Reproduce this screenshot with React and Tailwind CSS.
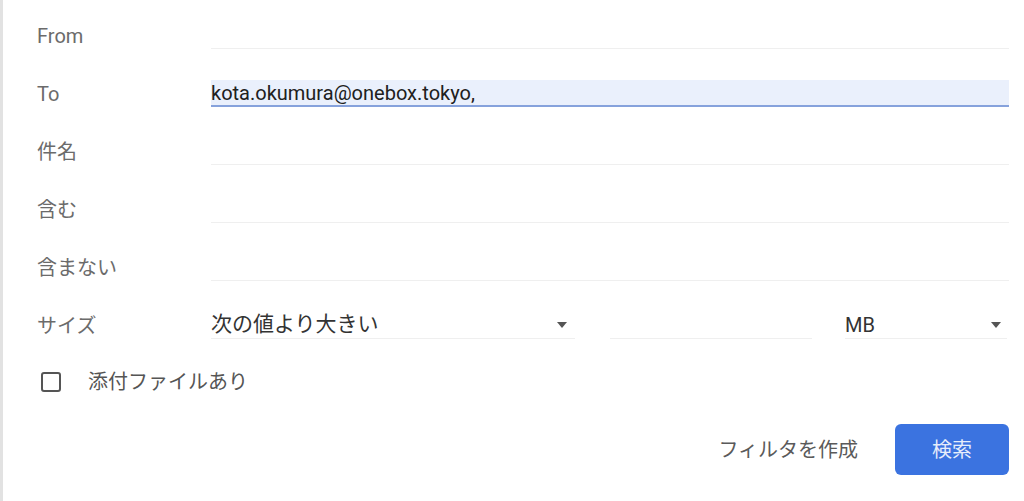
import React, { useState } from "react";

const font = { fontFamily: 'Roboto, "Noto Sans CJK JP", sans-serif' };

function Row({ label, value, active }) {
  return (
    <div className="flex items-center h-[27px]">
      <div className="w-[174px] text-[20px] text-[#6b6b6b]">{label}</div>
      <div
        className={
          active
            ? "flex-1 h-[27px] flex items-center bg-[#eaf0fc] border-b-2 border-[#86a2dc] text-[20px] text-[#202020]"
            : "flex-1 h-[27px] border-b border-[#efefef]"
        }
      >
        {value}
      </div>
    </div>
  );
}

function Arrow() {
  return (
    <svg width="10" height="6" viewBox="0 0 10 6" className="shrink-0">
      <path d="M0 0h10L5 6z" fill="#555" />
    </svg>
  );
}

export default function App() {
  const [attach, setAttach] = useState(false);

  return (
    <div className="w-[1024px] h-[501px] bg-white border-l-[3px] border-[#e2e2e2] overflow-hidden" style={font}>
      <div className="flex flex-col gap-[31px] pt-[22px] pl-[34px] pr-[15px]">
        <Row label="From" />
        <Row label="To" value="kota.okumura@onebox.tokyo," active />
        <Row label="件名" />
        <Row label="含む" />
        <Row label="含まない" />
        <div className="flex items-center h-[27px]">
          <div className="w-[174px] text-[20px] text-[#6b6b6b]">サイズ</div>
          <div className="w-[364px] h-[27px] flex items-center justify-between pr-[8px] border-b border-[#efefef] text-[21px] text-[#333]">
            次の値より大きい
            <Arrow />
          </div>
          <div className="w-[202px] h-[27px] ml-[35px] border-b border-[#efefef]" />
          <div className="w-[162px] h-[27px] ml-[33px] flex items-center justify-between pr-[6px] border-b border-[#efefef] text-[20px] text-[#333]">
            MB
            <Arrow />
          </div>
        </div>
      </div>
      <label className="flex items-center mt-[29px] ml-[5px] h-[28px] cursor-pointer">
        <input type="checkbox" className="hidden" checked={attach} onChange={(e) => setAttach(e.target.checked)} />
        <span className="w-[20px] h-[20px] ml-[33px] border-2 border-[#555] rounded-[3px]" />
        <span className="ml-[27px] text-[20px] text-[#555]">添付ファイルあり</span>
      </label>
      <div className="flex items-center justify-end mt-[28px] pr-[15px]">
        <button className="text-[20px] text-[#5a5a5a] mr-[37px]">フィルタを作成</button>
        <button className="w-[114px] h-[51px] bg-[#3b73e0] rounded-[6px] text-[20px] text-[#e6edfb]">検索</button>
      </div>
    </div>
  );
}
